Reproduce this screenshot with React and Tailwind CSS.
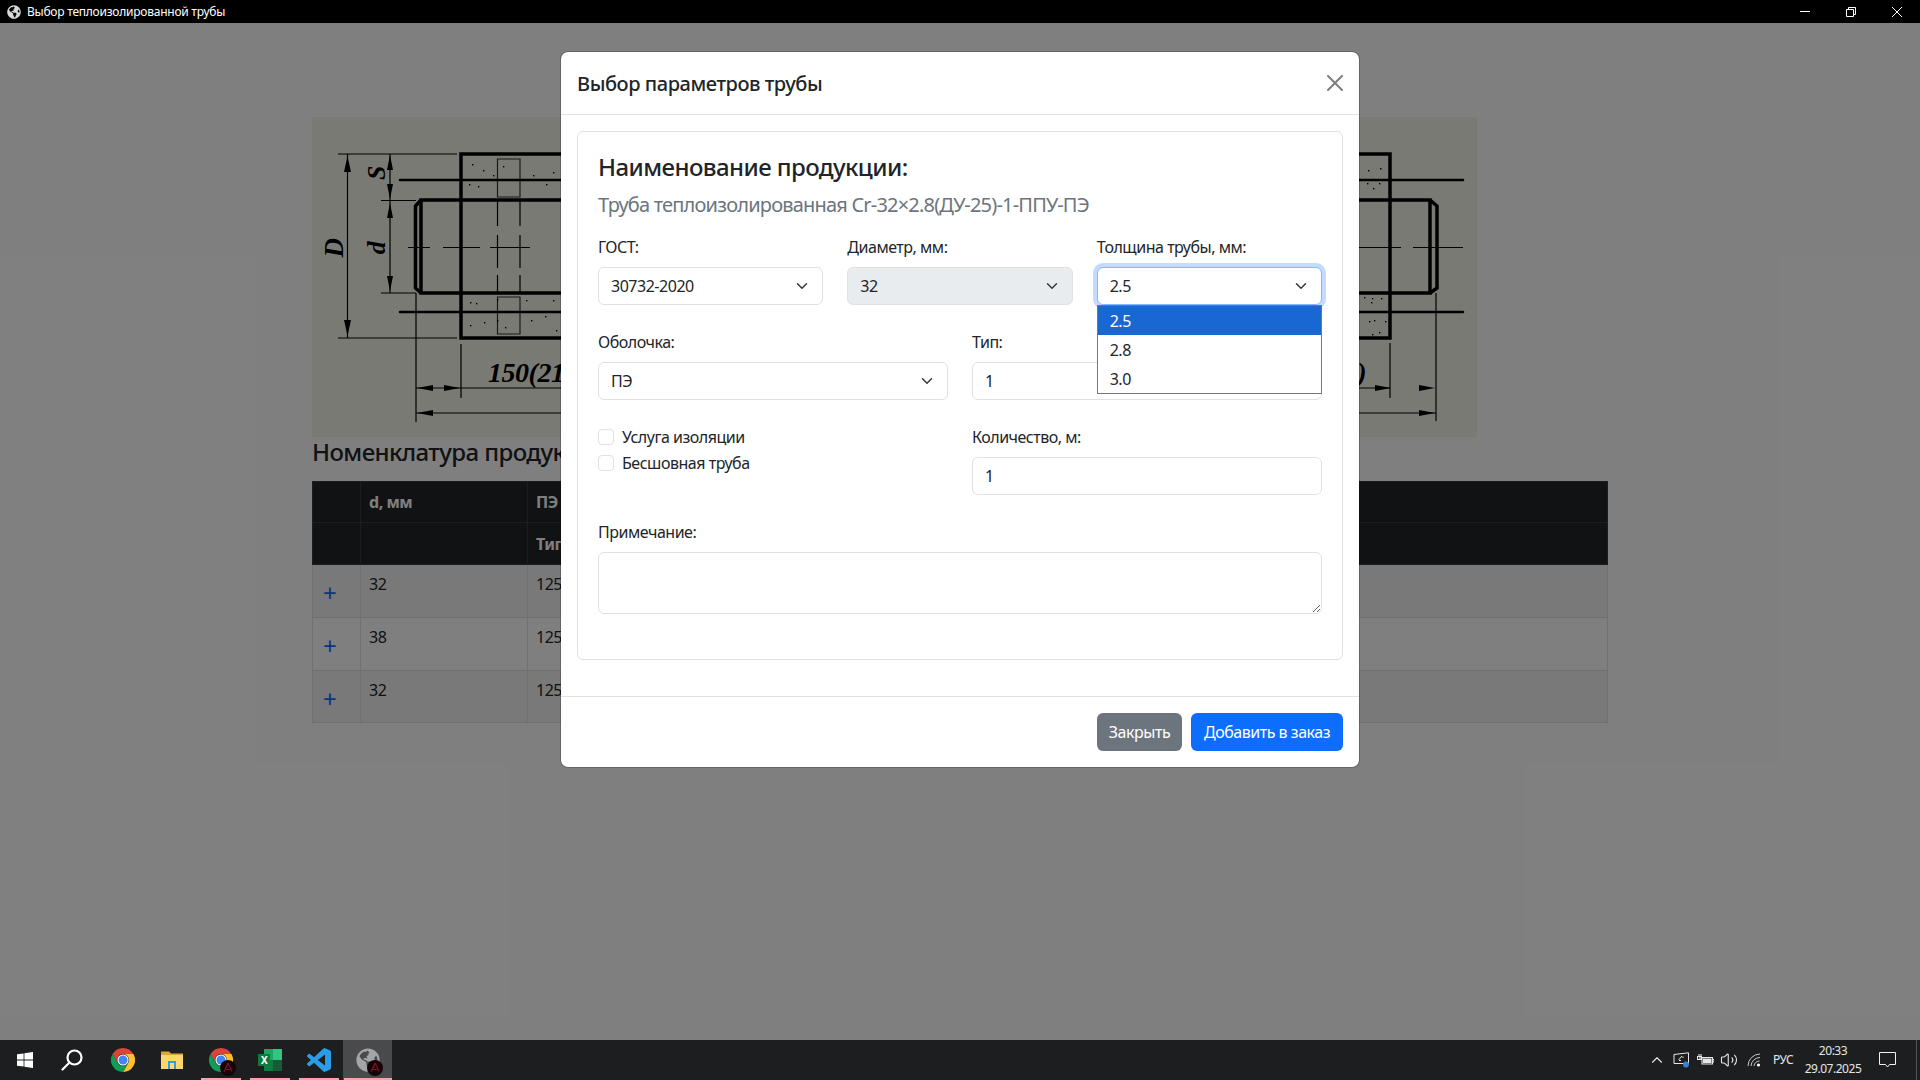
import React from "react";
import { FaGlobeAmericas } from "react-icons/fa";
import { ChevronUp, Volume2 } from "lucide-react";

const rows = [
  { d: "32", s: "125", striped: true, height: "h-[53px]" },
  { d: "38", s: "125", striped: false, height: "h-[53px]" },
  { d: "32", s: "125", striped: true, height: "h-[52px]" },
];

const specks = [
  [472, 164], [483, 170], [493, 175], [469, 184], [478, 186], [503, 166], [533, 175], [553, 172], [546, 184],
  [470, 302], [476, 303], [497, 299], [526, 300], [553, 300], [470, 325], [484, 322], [497, 320], [505, 327],
  [531, 320], [545, 316], [556, 330], [1368, 170], [1380, 168], [1367, 183], [1379, 183], [1373, 188],
  [1364, 297], [1372, 298], [1371, 302], [1381, 298], [1369, 321], [1374, 320], [1385, 321], [1372, 334], [1379, 332],
];

function PipeDrawing() {
  return (
    <svg viewBox="312 117 1165 320" className="block h-[320px] w-[1165px] bg-[#f5f5e9]">
      <g fill="none" stroke="#000">
        <g strokeWidth="1.2">
          <path d="M338 154H457M338 338H457M347.5 154V338" />
          <path d="M381 200.5H416M381 293H416M390 154V293" />
          <path d="M416 293V422M461 344V398M1390 343V398M1436 293V421" />
          <path d="M416 388H1390M416 413H1436" />
          <path d="M408 247.5H430M443 247.5H480M490 247.5H530M1340 247.5H1401M1413 247.5H1463" />
          <path d="M497.5 159H520V197H497.5ZM497.5 297H520V334H497.5Z" stroke="#333" />
          <path d="M497.5 200V226M497.5 235V268M497.5 275V293M520 200V226M520 235V268M520 275V293" />
        </g>
        <g strokeWidth="3.5">
          <path d="M461 154H1390V338H461ZM461 154V200M421 200H1430V293H421Z" />
          <path d="M421 200L415.5 206V288L421 293M1430 200L1437 206V288L1430 293" />
        </g>
        <path d="M400 180H1463M400 312H1463" strokeWidth="2.6" strokeLinecap="round" />
      </g>
      <g fill="#000">
        <path d="M347.5 156L344 172H351ZM347.5 336L344 320H351Z" />
        <path d="M390 155L387 170H393ZM390 199L387 184H393ZM390 203L387 218H393ZM390 291L387 276H393Z" />
        <path d="M417 388L433 385V391ZM460 388L444 385V391ZM1391 388L1375 385V391ZM1435 388L1419 385V391ZM417 413L433 410V416ZM1435 413L1419 410V416Z" />
        {specks.map(([x, y]) => <rect key={`${x}-${y}`} x={x} y={y} width="1.4" height="1.4" />)}
      </g>
      <g className="font-['Liberation_Serif',serif] italic" fontWeight="700" fill="#000">
        <text transform="rotate(-90 343 248)" x="343" y="248" fontSize="27" textAnchor="middle">D</text>
        <text transform="rotate(-90 385 173)" x="385" y="173" fontSize="26" textAnchor="middle">S</text>
        <text transform="rotate(-90 385 248)" x="385" y="248" fontSize="26" textAnchor="middle">d</text>
        <text x="488" y="382" fontSize="28">150(219)</text>
        <text x="1366" y="382" fontSize="28" textAnchor="end">150(219)</text>
      </g>
    </svg>
  );
}

function Chevron({ className }) {
  return (
    <svg viewBox="0 0 16 16" className={className} fill="none" stroke="#343a40" strokeWidth="2" strokeLinecap="round" strokeLinejoin="round">
      <path d="m2 5 6 6 6-6" />
    </svg>
  );
}

function SelectBox({ value, disabled, focused }) {
  return (
    <div className={`flex h-[38px] items-center justify-between rounded-[6px] border pl-[12px] pr-[12px] ${focused ? "border-[#86b7fe] shadow-[0_0_0_4px_rgba(13,110,253,0.25)]" : "border-[#dee2e6]"} ${disabled ? "bg-[#e9ecef]" : "bg-white"}`}>
      <span>{value}</span>
      <Chevron className="h-[12px] w-[16px]" />
    </div>
  );
}

function Field({ label, children, className = "" }) {
  return (
    <div className={className}>
      <label className="mb-[8px] block leading-[24px]">{label}</label>
      {children}
    </div>
  );
}

function TextInput({ value }) {
  return <input readOnly value={value} className="block h-[38px] w-full rounded-[6px] border border-[#dee2e6] bg-white px-[12px] text-[#212529] outline-none" />;
}

function Check({ label }) {
  return (
    <label className="flex h-[26px] items-center gap-[8px]">
      <input type="checkbox" className="h-[16px] w-[16px] appearance-none rounded-[4px] border border-[#dee2e6] bg-white" />
      <span>{label}</span>
    </label>
  );
}

function PipeModal() {
  return (
    <div className="w-[800px] rounded-[8px] border border-black/20 bg-white bg-clip-padding text-[#212529]">
      <div className="flex h-[63px] items-center justify-between border-b border-[#dee2e6] px-[16px]">
        <h5 className="pt-[2px] text-[20px] font-medium leading-[30px] tracking-[-0.022em]">Выбор параметров трубы</h5>
        <svg viewBox="0 0 16 16" className="h-[16px] w-[16px] opacity-50" fill="#000">
          <path d="M.293.293a1 1 0 0 1 1.414 0L8 6.586 14.293.293a1 1 0 1 1 1.414 1.414L9.414 8l6.293 6.293a1 1 0 0 1-1.414 1.414L8 9.414l-6.293 6.293a1 1 0 0 1-1.414-1.414L6.586 8 .293 1.707a1 1 0 0 1 0-1.414z" />
        </svg>
      </div>

      <div className="px-[16px] pb-[36px] pt-[16px]">
        <div className="rounded-[6px] border border-[#dee2e6] px-[20px] pb-[21px] pt-[20px]">
          <h4 className="mb-[12px] text-[24px] font-medium leading-[29px] tracking-[-0.024em]">Наименование продукции:</h4>
          <h6 className="mb-[18px] text-[20px] leading-[24px] tracking-[-0.04em] text-[#6c757d]">Труба теплоизолированная Cr-32×2.8(ДУ-25)-1-ППУ-ПЭ</h6>

          <div className="mb-[25px] grid grid-cols-3 gap-[24px]">
            <Field label="ГОСТ:"><SelectBox value="30732-2020" /></Field>
            <Field label="Диаметр, мм:"><SelectBox value="32" disabled /></Field>
            <Field label="Толщина трубы, мм:" className="relative">
              <SelectBox value="2.5" focused />
              <div className="absolute left-0 right-0 top-[70px] z-10 border border-[#767676] bg-white">
                <div className="flex h-[29px] items-center bg-[#1967d2] px-[12px] text-white">2.5</div>
                <div className="flex h-[29px] items-center px-[12px]">2.8</div>
                <div className="flex h-[29px] items-center px-[12px]">3.0</div>
              </div>
            </Field>
          </div>

          <div className="mb-[25px] grid grid-cols-2 gap-[24px]">
            <Field label="Оболочка:"><SelectBox value="ПЭ" /></Field>
            <Field label="Тип:"><TextInput value="1" /></Field>
          </div>

          <div className="mb-[25px] grid grid-cols-2 gap-[24px]">
            <div className="-mt-[1px]">
              <Check label="Услуга изоляции" />
              <Check label="Бесшовная труба" />
            </div>
            <Field label="Количество, м:"><TextInput value="1" /></Field>
          </div>

          <Field label="Примечание:" className="mb-[24px]">
            <textarea readOnly className="block h-[62px] w-full resize-y rounded-[6px] border border-[#dee2e6] bg-white px-[12px] py-[6px] outline-none" />
          </Field>
        </div>
      </div>

      <div className="flex justify-end gap-[9px] border-t border-[#dee2e6] p-[16px]">
        <button className="h-[38px] w-[85px] rounded-[6px] bg-[#6c757d] text-white">Закрыть</button>
        <button className="h-[38px] w-[152px] rounded-[6px] bg-[#0d6efd] text-white">Добавить в заказ</button>
      </div>
    </div>
  );
}

function ProductTable() {
  return (
    <table className="w-full table-fixed border-collapse text-[#212529]">
      <colgroup>
        <col className="w-[48px]" />
        <col className="w-[167px]" />
        <col />
      </colgroup>
      <thead className="bg-[#212529] text-left text-white">
        <tr className="h-[41px]">
          <th className="border border-[#373b3e]" />
          <th className="border border-[#373b3e] px-[8px] font-bold">d, мм</th>
          <th className="border border-[#373b3e] px-[8px] font-bold">ПЭ</th>
        </tr>
        <tr className="h-[42px]">
          <th className="border border-[#373b3e]" />
          <th className="border border-[#373b3e] px-[8px]" />
          <th className="border border-[#373b3e] px-[8px] font-bold">Тип</th>
        </tr>
      </thead>
      <tbody>
        {rows.map((row, i) => (
          <tr key={i} className={`${row.height} ${row.striped ? "bg-[#f2f2f2]" : "bg-white"}`}>
            <td className="border border-[#dee2e6] pl-[10px] pt-[13px] align-top text-[24px] leading-[30px] text-[#0d6efd]">+</td>
            <td className="border border-[#dee2e6] px-[8px] pt-[7px] align-top leading-[24px]">{row.d}</td>
            <td className="border border-[#dee2e6] px-[8px] pt-[7px] align-top leading-[24px]">{row.s}</td>
          </tr>
        ))}
      </tbody>
    </table>
  );
}

function ChromeIcon({ badge }) {
  return (
    <div className="relative h-[24px] w-[24px]">
      <svg viewBox="0 0 24 24" className="h-[24px] w-[24px]">
        <path fill="#db4437" d="M12 0A12 12 0 0 0 1.6 6L6.8 15A6 6 0 0 1 12 6H22.4A12 12 0 0 0 12 0Z" />
        <path fill="#fbc02d" d="M22.4 6H12A6 6 0 0 1 17.2 15L12 24A12 12 0 0 0 22.4 6Z" />
        <path fill="#0f9d58" d="M1.6 6A12 12 0 0 0 12 24L17.2 15A6 6 0 0 1 6.8 15Z" />
        <circle cx="12" cy="12" r="5.6" fill="#fff" />
        <circle cx="12" cy="12" r="4.5" fill="#4285f4" />
      </svg>
      {badge && <AppBadge />}
    </div>
  );
}

function AppBadge() {
  return (
    <svg viewBox="0 0 16 16" className="absolute bottom-[-4px] right-[-3px] h-[16px] w-[16px]">
      <circle cx="8" cy="8" r="8" fill="#16040a" />
      <path d="M8 3L12 11.5M8 3L4 12M5 9.5H11.5M8 3L6.5 8" stroke="#7c141c" strokeWidth="1.1" fill="none" />
    </svg>
  );
}

function TaskSlot({ children, line, active }) {
  return (
    <div className={`relative flex h-[40px] w-[49px] items-center justify-center ${active ? "bg-[#4a4a4c]" : ""}`}>
      {children}
      {line && <div className={`absolute bottom-0 h-[2px] bg-[#ff9fac] ${active ? "w-[48px]" : "w-[40px]"}`} />}
    </div>
  );
}

function Taskbar() {
  return (
    <div className="flex h-[40px] shrink-0 items-center bg-[#1d1e20] text-[12px] text-[#e6e6e6]">
      <TaskSlot>
        <svg viewBox="0 0 16 16" className="h-[16px] w-[16px]" fill="#fff">
          <path d="M0 2.3L6.6 1.4V7.6H0ZM7.4 1.3L16 0V7.6H7.4ZM0 8.4H6.6V14.6L0 13.7ZM7.4 8.4H16V16L7.4 14.7Z" />
        </svg>
      </TaskSlot>
      <TaskSlot>
        <svg viewBox="0 0 22 22" className="mr-[4px] h-[22px] w-[22px]" fill="none" stroke="#fff" strokeWidth="2.2">
          <circle cx="13.5" cy="8.5" r="7" />
          <path d="M8.5 13.5L1.5 20.5" strokeLinecap="round" />
        </svg>
      </TaskSlot>
      <TaskSlot><ChromeIcon /></TaskSlot>
      <TaskSlot>
        <svg viewBox="0 0 22 20" className="h-[20px] w-[22px]">
          <path fill="#e0a92e" d="M0 1.5H8L10 3.5H22V19H0Z" />
          <path fill="#ffd76e" d="M0 5H22V19H0Z" />
          <path fill="#3a9bdc" d="M7 11H15V19H13V13H9V19H7Z" />
        </svg>
      </TaskSlot>
      <TaskSlot line><ChromeIcon badge /></TaskSlot>
      <TaskSlot line>
        <svg viewBox="0 0 24 22" className="h-[22px] w-[24px]">
          <path fill="#21a366" d="M6 0H24V11H6Z" />
          <path fill="#33c481" d="M15 0H24V11H15Z" />
          <path fill="#107c41" d="M6 11H24V22H6Z" />
          <path fill="#185c37" d="M15 11H24V22H15Z" />
          <path fill="#0f7a3e" d="M0 5H12V17H0Z" />
          <text x="6" y="14.5" fontSize="10" fontWeight="700" fill="#fff" textAnchor="middle">X</text>
        </svg>
      </TaskSlot>
      <TaskSlot line>
        <svg viewBox="0 0 24 24" className="h-[24px] w-[24px]" fill="#2a9de8">
          <path d="M23.15 2.587L18.21.21a1.494 1.494 0 0 0-1.705.29l-9.46 8.63-4.12-3.128a.999.999 0 0 0-1.276.057L.327 7.261A1 1 0 0 0 .326 8.74L3.899 12 .326 15.26a1 1 0 0 0 .001 1.479L1.65 17.94a.999.999 0 0 0 1.276.057l4.12-3.128 9.46 8.63a1.492 1.492 0 0 0 1.704.29l4.942-2.377A1.5 1.5 0 0 0 24 20.06V3.939a1.5 1.5 0 0 0-.85-1.352zm-5.146 14.861L10.826 12l7.178-5.448v10.896z" />
        </svg>
      </TaskSlot>
      <TaskSlot line active>
        <div className="relative h-[24px] w-[24px]">
          <FaGlobeAmericas className="h-[24px] w-[24px] text-[#a3a5a7]" />
          <AppBadge />
        </div>
      </TaskSlot>

      <div className="ml-auto flex h-full items-center">
        <div className="flex w-[24px] justify-center"><ChevronUp size={18} strokeWidth={1.5} /></div>
        <div className="flex w-[24px] justify-center">
          <svg viewBox="0 0 17 16" className="h-[16px] w-[17px]" fill="none" stroke="#e6e6e6" strokeWidth="1">
            <path d="M1 2.5L15.5 .8V11.5H1Z" />
            <path d="M5.5 8L9 4M8 8.5H6M10 4.5V6" />
            <circle cx="13" cy="12.5" r="3" fill="#3a80d0" stroke="none" />
          </svg>
        </div>
        <div className="flex w-[24px] justify-center">
          <svg viewBox="0 0 17 12" className="h-[12px] w-[17px]" fill="none" stroke="#e6e6e6" strokeWidth="1.1">
            <path d="M5 3.5H15.5V10H5ZM15.5 5.5H17V8H15.5M0.5 5.5H3V2M2 2V0M4 2V0M0.5 2.5H4.5V5.5H0.5Z" />
            <path d="M6 4.5H14.5V9H6Z" fill="#e6e6e6" stroke="none" />
          </svg>
        </div>
        <div className="flex w-[24px] justify-center"><Volume2 size={18} strokeWidth={1.5} /></div>
        <div className="flex w-[25px] justify-center">
          <svg viewBox="0 0 14 14" className="h-[14px] w-[14px]" fill="none" stroke="#c8c8c8" strokeWidth="1">
            <path d="M1 13A12 12 0 0 1 13 1M4 13A9 9 0 0 1 13 4.5M7 13A6 6 0 0 1 12.5 8" />
            <circle cx="11.5" cy="12" r="1.6" fill="#fff" stroke="none" />
          </svg>
        </div>
        <div className="w-[34px] text-center">РУС</div>
        <div className="w-[66px] text-center leading-[18px]">
          <div>20:33</div>
          <div>29.07.2025</div>
        </div>
        <div className="flex w-[42px] justify-center">
          <svg viewBox="0 0 17 16" className="h-[16px] w-[17px]" fill="none" stroke="#f0f0f0" strokeWidth="1">
            <path d="M.5 .5H16.5V12.5H10.5L8.5 15L6.5 12.5H.5Z" />
          </svg>
        </div>
        <div className="h-full w-[9px] border-r border-[#555]" />
        <div className="w-[3px]" />
      </div>
    </div>
  );
}

export default function App() {
  return (
    <div className="flex h-screen flex-col overflow-hidden font-['Noto_Sans',sans-serif] text-[16px] tracking-[-0.03em]">
      <div className="flex h-[23px] shrink-0 items-center bg-black text-[12px] text-white">
        <FaGlobeAmericas className="ml-[7px] h-[14px] w-[14px] text-[#d8d8d8]" />
        <span className="ml-[6px] tracking-[-0.02em]">Выбор теплоизолированной трубы</span>
        <div className="ml-auto flex items-center">
          <svg viewBox="0 0 10 1" className="mr-[36px] h-[1px] w-[10px]"><path d="M0 .5H10" stroke="#fff" /></svg>
          <svg viewBox="0 0 10 10" className="mr-[36px] h-[10px] w-[10px]" fill="none" stroke="#fff">
            <path d="M.5 2.5H7.5V9.5H.5ZM2.5 2.5V.5H9.5V7.5H7.5" />
          </svg>
          <svg viewBox="0 0 10 10" className="mr-[18px] h-[10px] w-[10px]" fill="none" stroke="#fff">
            <path d="M0 0L10 10M10 0L0 10" />
          </svg>
        </div>
      </div>

      <main className="relative flex-1 bg-white px-[312px] pt-[94px]">
        <PipeDrawing />
        <h4 className="mb-[15px] mt-[1px] text-[24px] font-medium leading-[28px] tracking-[-0.024em] text-[#212529]">Номенклатура продукции</h4>
        <ProductTable />

        <div className="absolute inset-0 flex items-start justify-center bg-black/50 pt-[28px]">
          <PipeModal />
        </div>
      </main>

      <Taskbar />
    </div>
  );
}
